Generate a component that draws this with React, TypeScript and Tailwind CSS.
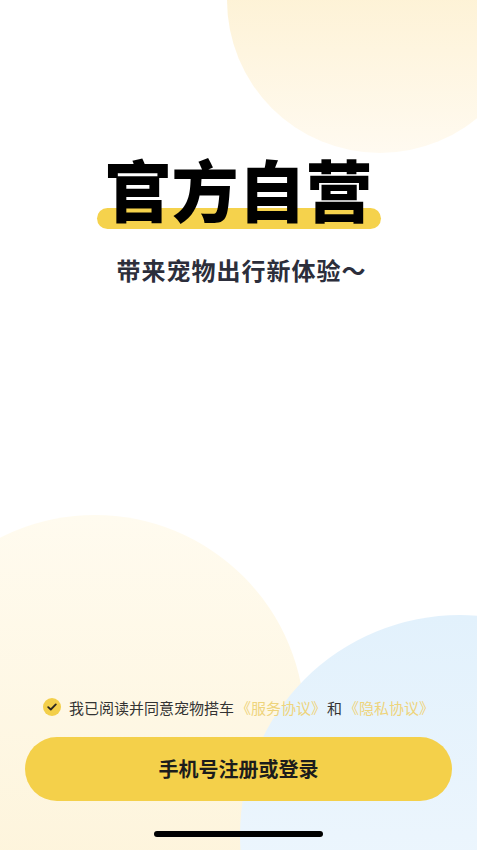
import React, { useState } from 'react';

const CJK = "font-['Noto_Sans_CJK_SC','Noto_Sans',sans-serif]";

function CheckCircle({ checked }: { checked: boolean }) {
  return (
    <span className="flex h-[18px] w-[18px] items-center justify-center rounded-full bg-[#f3cf4a]">
      {checked && (
        <svg width="10" height="8" viewBox="0 0 10 8" fill="none">
          <path d="M1.2 4.1 3.8 6.5 8.8 1.4" stroke="#2b2620" strokeWidth="1.8" strokeLinecap="round" strokeLinejoin="round" />
        </svg>
      )}
    </span>
  );
}

export default function App() {
  const [agreed, setAgreed] = useState(true);

  return (
    <div className={`relative flex h-[850px] w-full flex-col overflow-hidden bg-white ${CJK}`}>
      {/* background blobs */}
      <div className="pointer-events-none absolute left-[227px] top-[-153px] h-[306px] w-[306px] rounded-full bg-gradient-to-b from-[#fcebbd] to-[#fffaf0]" />
      <div className="pointer-events-none absolute left-[-115px] top-[515px] h-[420px] w-[420px] rounded-full bg-gradient-to-b from-[#fffbef] to-[#fdf3d8]" />
      <div className="pointer-events-none absolute left-[240px] top-[615px] h-[440px] w-[440px] rounded-full bg-gradient-to-b from-[#e2f1fc] to-[#f4f9fe]" />

      {/* headline */}
      <div className="relative mt-[154px] flex flex-col items-center">
        <div className="relative">
          <div className="absolute bottom-[-8px] left-[-8px] right-[-8px] h-[21px] rounded-full bg-[#f5d24c]" />
          <h1 className="relative text-[67px] font-black leading-none text-black">官方自营</h1>
        </div>
        <p className="ml-[6px] mt-[37px] text-[24px] font-bold leading-none tracking-[1px] text-[#2c2e3b]">带来宠物出行新体验～</p>
      </div>

      <div className="flex-1" />

      {/* bottom */}
      <div className="relative flex flex-col items-center">
        <label
          className="flex h-[18px] w-full cursor-pointer items-center pl-[43px]"
          onClick={() => setAgreed(!agreed)}
        >
          <CheckCircle checked={agreed} />
          <span className="ml-[8px] whitespace-nowrap text-[15px] leading-none text-[#333333]">
            我已阅读并同意宠物搭车
            <span className="ml-[2px] mr-[1px] text-[#eed47c]">《服务协议》</span>
            和
            <span className="ml-[2px] text-[#eed47c]">《隐私协议》</span>
          </span>
        </label>

        <button className="mt-[21px] flex h-[64px] w-[427px] items-center justify-center rounded-full bg-[#f4d04a] text-[20px] font-bold text-[#1c1c1c]">
          手机号注册或登录
        </button>

        <div className="mb-[13px] mt-[30px] h-[6px] w-[169px] rounded-full bg-black" />
      </div>
    </div>
  );
}
